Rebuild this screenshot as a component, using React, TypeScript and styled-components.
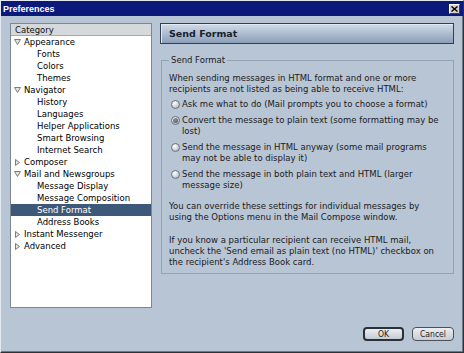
import React from "react";
import styled, { createGlobalStyle } from "styled-components";

const Global = createGlobalStyle`
  html, body { margin: 0; padding: 0; background: #b8c5d5; }
  body { font-family: "DejaVu Sans", Verdana, sans-serif; }
  * { box-sizing: border-box; }
`;

const Window = styled.div`
  width: 464px;
  height: 353px;
  display: flex;
  flex-direction: column;
  background: #b8c5d5;
  border-top: 1px solid #e4e9ef;
  border-left: 1px solid #e4e9ef;
  border-right: 1px solid #2c3136;
  border-bottom: 1px solid #2c3136;
  box-shadow: inset -1px -1px 0 #6d7884;
  overflow: hidden;
`;

const TitleBar = styled.div`
  height: 15px;
  flex: none;
  display: flex;
  align-items: center;
  justify-content: space-between;
  background: #0b1a7a;
  padding: 0 3px 0 2px;
`;

const Title = styled.span`
  font: bold 9px "Liberation Sans", Arial, sans-serif;
  color: #ffffff;
`;

const CloseButton = styled.button`
  width: 11px;
  height: 10px;
  padding: 0;
  display: flex;
  align-items: center;
  justify-content: center;
  background: #d4d0c8;
  border-top: 1px solid #ffffff;
  border-left: 1px solid #ffffff;
  border-right: 1px solid #404040;
  border-bottom: 1px solid #404040;
`;

const Content = styled.div`
  flex: 1;
  display: flex;
  flex-direction: column;
  padding: 7px 9px 0 9px;
`;

const Main = styled.div`
  display: flex;
  gap: 8px;
  height: 285px;
`;

const Sidebar = styled.div`
  width: 142px;
  flex: none;
  display: flex;
  flex-direction: column;
  background: #ffffff;
  border: 1px solid #7b8794;
`;

const SidebarHeader = styled.div`
  height: 12px;
  flex: none;
  display: flex;
  align-items: center;
  padding-left: 4px;
  background: #d6d9dc;
  border-bottom: 1px solid #a3abb4;
  font-size: 8.5px;
  color: #111;
`;

const TreeRow = styled.div<{ $level: number; $selected?: boolean }>`
  height: 12px;
  display: flex;
  align-items: center;
  gap: 3px;
  padding-left: ${(p) => (p.$level === 0 ? 3 : 26)}px;
  font-size: 8.5px;
  white-space: nowrap;
  color: ${(p) => (p.$selected ? "#ffffff" : "#000000")};
  background: ${(p) => (p.$selected ? "#3d5878" : "transparent")};
`;

const Twisty = styled.span`
  width: 7px;
  height: 7px;
  display: flex;
  align-items: center;
  justify-content: center;
`;

const RightColumn = styled.div`
  flex: 1;
  display: flex;
  flex-direction: column;
`;

const PanelHeader = styled.div`
  height: 21px;
  display: flex;
  align-items: center;
  padding-left: 8px;
  border: 1px solid #344050;
  background: linear-gradient(#cfdbe8, #8c9fb8);
  box-shadow: inset 1px 1px 0 #e3eaf3;
  font-weight: bold;
  font-size: 9.5px;
  color: #18212d;
`;

const GroupBox = styled.fieldset`
  margin: 11px 0 0 1px;
  padding: 8px 7px 5px 7px;
  border: 1px solid #93a2b4;
  min-width: 0;
`;

const Legend = styled.legend`
  padding: 0 2px;
  font-size: 8.5px;
  line-height: 10px;
  color: #1b1b1b;
`;

const Text = styled.p<{ $gap?: number }>`
  margin: ${(p) => p.$gap ?? 0}px 0 0 0;
  font-size: 8.5px;
  line-height: 11px;
  color: #1b1b1b;
  white-space: nowrap;
`;

const RadioRow = styled.label<{ $gap: number }>`
  display: flex;
  align-items: flex-start;
  gap: 2px;
  margin-top: ${(p) => p.$gap}px;
  padding-left: 2px;
  font-size: 8.5px;
  line-height: 11px;
  color: #1b1b1b;
  white-space: nowrap;
`;

const RadioCircle = styled.span<{ $checked?: boolean }>`
  width: 9px;
  height: 9px;
  flex: none;
  margin-top: 1px;
  border-radius: 50%;
  border: 1px solid #6a737d;
  background: radial-gradient(circle at 35% 30%, #ffffff 0%, #d9dde1 45%, #9ea6ae 100%);
  display: flex;
  align-items: center;
  justify-content: center;
  &::after {
    content: "";
    width: 5px;
    height: 5px;
    border-radius: 50%;
    background: ${(p) => (p.$checked ? "radial-gradient(circle at 40% 35%, #8d949b, #4b535b)" : "transparent")};
  }
`;

const Footer = styled.div`
  display: flex;
  justify-content: flex-end;
  gap: 8px;
  margin-top: 19px;
`;

const Button = styled.button<{ $default?: boolean }>`
  width: ${(p) => (p.$default ? 41 : 42)}px;
  height: 14px;
  padding: 0;
  border-radius: 4px;
  border: ${(p) => (p.$default ? "2px solid #2a3036" : "1px solid #4a5258")};
  background: linear-gradient(#eceff2, #c5ccd3);
  font-family: "DejaVu Sans Condensed", "DejaVu Sans", sans-serif;
  font-stretch: condensed;
  font-size: 8.5px;
  line-height: 10px;
  color: #222;
`;

const ExpandedIcon = () => (
  <svg width="7" height="6" viewBox="0 0 7 6">
    <polygon points="0.5,0.5 6.5,0.5 3.5,5.5" fill="#e4e4e4" stroke="#7c7c7c" strokeWidth="1" />
  </svg>
);

const CollapsedIcon = () => (
  <svg width="5" height="7" viewBox="0 0 5 7">
    <polygon points="0.5,0.5 4.5,3.5 0.5,6.5" fill="#e4e4e4" stroke="#7c7c7c" strokeWidth="1" />
  </svg>
);

type Item = { label: string; level: number; state?: "open" | "closed"; selected?: boolean };

const items: Item[] = [
  { label: "Appearance", level: 0, state: "open" },
  { label: "Fonts", level: 1 },
  { label: "Colors", level: 1 },
  { label: "Themes", level: 1 },
  { label: "Navigator", level: 0, state: "open" },
  { label: "History", level: 1 },
  { label: "Languages", level: 1 },
  { label: "Helper Applications", level: 1 },
  { label: "Smart Browsing", level: 1 },
  { label: "Internet Search", level: 1 },
  { label: "Composer", level: 0, state: "closed" },
  { label: "Mail and Newsgroups", level: 0, state: "open" },
  { label: "Message Display", level: 1 },
  { label: "Message Composition", level: 1 },
  { label: "Send Format", level: 1, selected: true },
  { label: "Address Books", level: 1 },
  { label: "Instant Messenger", level: 0, state: "closed" },
  { label: "Advanced", level: 0, state: "closed" },
];

const radios = [
  { lines: ["Ask me what to do (Mail prompts you to choose a format)"] },
  { lines: ["Convert the message to plain text (some formatting may be", "lost)"], checked: true },
  { lines: ["Send the message in HTML anyway (some mail programs", "may not be able to display it)"] },
  { lines: ["Send the message in both plain text and HTML (larger", "message size)"] },
];

export default function App() {
  return (
    <>
      <Global />
      <Window>
        <TitleBar>
          <Title>Preferences</Title>
          <CloseButton aria-label="Close">
            <svg width="7" height="6" viewBox="0 0 7 6">
              <path d="M0.5 0.5 L6.5 5.5 M6.5 0.5 L0.5 5.5" stroke="#000" strokeWidth="1.4" />
            </svg>
          </CloseButton>
        </TitleBar>
        <Content>
          <Main>
            <Sidebar>
              <SidebarHeader>Category</SidebarHeader>
              {items.map((it) => (
                <TreeRow key={it.label} $level={it.level} $selected={it.selected}>
                  {it.level === 0 && (
                    <Twisty>{it.state === "open" ? <ExpandedIcon /> : <CollapsedIcon />}</Twisty>
                  )}
                  {it.label}
                </TreeRow>
              ))}
            </Sidebar>
            <RightColumn>
              <PanelHeader>Send Format</PanelHeader>
              <GroupBox>
                <Legend>Send Format</Legend>
                <Text>
                  When sending messages in HTML format and one or more
                  <br />
                  recipients are not listed as being able to receive HTML:
                </Text>
                {radios.map((r, i) => (
                  <RadioRow key={i} $gap={i === 0 ? 4 : 5}>
                    <RadioCircle $checked={r.checked} />
                    <span>
                      {r.lines.map((l, j) => (
                        <React.Fragment key={j}>
                          {j > 0 && <br />}
                          {l}
                        </React.Fragment>
                      ))}
                    </span>
                  </RadioRow>
                ))}
                <Text $gap={10}>
                  You can override these settings for individual messages by
                  <br />
                  using the Options menu in the Mail Compose window.
                </Text>
                <Text $gap={12}>
                  If you know a particular recipient can receive HTML mail,
                  <br />
                  uncheck the 'Send email as plain text (no HTML)' checkbox on
                  <br />
                  the recipient's Address Book card.
                </Text>
              </GroupBox>
            </RightColumn>
          </Main>
          <Footer>
            <Button $default>OK</Button>
            <Button>Cancel</Button>
          </Footer>
        </Content>
      </Window>
    </>
  );
}
